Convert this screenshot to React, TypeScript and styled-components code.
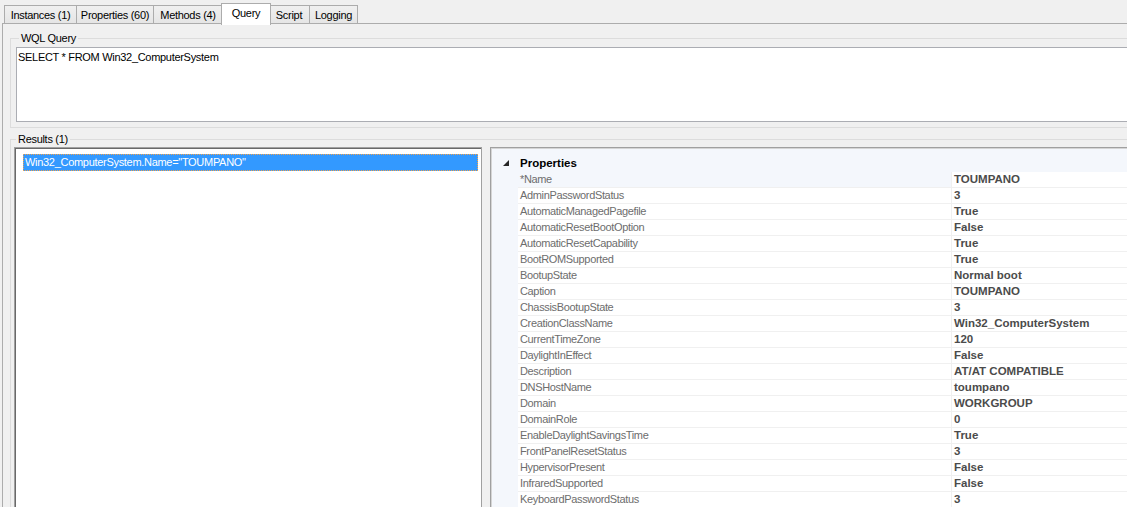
import React from 'react';
import styled, { createGlobalStyle } from 'styled-components';

const GlobalStyle = createGlobalStyle`
  html, body {
    margin: 0;
    padding: 0;
    background: #f0f0f0;
    overflow: hidden;
  }
  body {
    font-family: "Liberation Sans", Arial, sans-serif;
    font-size: 11px;
    letter-spacing: -0.3px;
    color: #000;
  }
`;

// tab captions with their widths in px
const tabs: [string, number][] = [
  ['Instances (1)', 73],
  ['Properties (60)', 78],
  ['Methods (4)', 70],
  ['Query', 50],
  ['Script', 42],
  ['Logging', 49],
];

const properties: [string, string][] = [
  ['*Name', 'TOUMPANO'],
  ['AdminPasswordStatus', '3'],
  ['AutomaticManagedPagefile', 'True'],
  ['AutomaticResetBootOption', 'False'],
  ['AutomaticResetCapability', 'True'],
  ['BootROMSupported', 'True'],
  ['BootupState', 'Normal boot'],
  ['Caption', 'TOUMPANO'],
  ['ChassisBootupState', '3'],
  ['CreationClassName', 'Win32_ComputerSystem'],
  ['CurrentTimeZone', '120'],
  ['DaylightInEffect', 'False'],
  ['Description', 'AT/AT COMPATIBLE'],
  ['DNSHostName', 'toumpano'],
  ['Domain', 'WORKGROUP'],
  ['DomainRole', '0'],
  ['EnableDaylightSavingsTime', 'True'],
  ['FrontPanelResetStatus', '3'],
  ['HypervisorPresent', 'False'],
  ['InfraredSupported', 'False'],
  ['KeyboardPasswordStatus', '3'],
];

const App = () => {
  return (
    <Window>
      <GlobalStyle />
      <TabStrip>
        {tabs.map(([t, w]) => (
          <Tab key={t} $active={t === 'Query'} $width={w}>
            {t}
          </Tab>
        ))}
      </TabStrip>
      <TabPage>
        <GroupBox>
          <Legend $indent={3}>WQL Query</Legend>
          <QueryBox>SELECT * FROM Win32_ComputerSystem</QueryBox>
        </GroupBox>
        <ResultsGroup>
          <Legend $indent={2}>Results (1)</Legend>
          <Split>
            <ListBox>
              <ListItem $selected>Win32_ComputerSystem.Name="TOUMPANO"</ListItem>
            </ListBox>
            <Splitter />
            <PropertyGrid>
              <CategoryRow>
                <Margin>
                  <svg width="6" height="6" viewBox="0 0 6 6">
                    <polygon points="6,0 6,6 0,6" fill="#262626" />
                  </svg>
                </Margin>
                <CategoryLabel>Properties</CategoryLabel>
              </CategoryRow>
              {properties.map(([name, value], i) => (
                <PropRow key={name}>
                  <Margin />
                  <NameCell $highlight={i === 0}>{name}</NameCell>
                  <ValueCell>{value}</ValueCell>
                </PropRow>
              ))}
            </PropertyGrid>
          </Split>
        </ResultsGroup>
      </TabPage>
    </Window>
  );
};

export default App;

const Window = styled.div`
  width: 1127px;
  height: 507px;
  overflow: hidden;
  background: #f0f0f0;
`;

const TabStrip = styled.div`
  display: flex;
  align-items: flex-end;
  height: 24px;
  padding-left: 4px;
  position: relative;
  z-index: 1;
`;

const Tab = styled.div<{ $active?: boolean; $width: number }>`
  box-sizing: border-box;
  width: ${(p) => p.$width}px;
  flex-shrink: 0;
  text-align: center;
  height: ${(p) => (p.$active ? '22px' : '19px')};
  line-height: ${(p) => (p.$active ? '19px' : '18px')};
  margin: 0 ${(p) => (p.$active ? '-2px' : '0')} ${(p) => (p.$active ? '-1px' : '0')}
    ${(p) => (p.$active ? '-2px' : '-1px')};
  border: 1px solid #acacac;
  border-bottom: ${(p) => (p.$active ? 'none' : '1px solid #acacac')};
  background: ${(p) =>
    p.$active ? '#ffffff' : 'linear-gradient(#f0f0f0, #e5e5e5)'};
  position: relative;
  z-index: ${(p) => (p.$active ? 2 : 0)};
  white-space: nowrap;
  &:first-child {
    margin-left: 0;
  }
`;

const TabPage = styled.div`
  box-sizing: border-box;
  width: 1160px;
  height: 500px;
  margin-left: 2px;
  margin-top: -1px;
  border: 1px solid #acacac;
  background: #f0f0f0;
  padding: 8px 0 0 7px;
  display: flex;
  flex-direction: column;
  gap: 5px;
`;

const GroupBox = styled.fieldset`
  margin: 0;
  padding: 2px 30px 5px 5px;
  border: 1px solid #dcdcdc;
  border-radius: 0;
  min-width: 0;
`;

const ResultsGroup = styled(GroupBox)`
  flex: 1;
  padding: 0 30px 0 3px;
  display: flex;
  flex-direction: column;
`;

const Legend = styled.legend<{ $indent: number }>`
  padding: 0 2px;
  margin-left: ${(p) => p.$indent}px;
  line-height: 13px;
  color: #000;
`;

const QueryBox = styled.div`
  box-sizing: border-box;
  height: 75px;
  border: 1px solid #abadb3;
  background: #fff;
  padding: 2px 1px;
  line-height: 14px;
`;

const Split = styled.div`
  display: flex;
  flex: 1;
  margin-top: 1px;
  min-height: 0;
`;

const ListBox = styled.div`
  box-sizing: border-box;
  width: 468px;
  flex-shrink: 0;
  background: #fff;
  border: 1px solid #a0a0a0;
  box-shadow: inset 1px 1px 0 #696969;
  padding: 6px 3px 0 8px;
`;

const ListItem = styled.div<{ $selected?: boolean }>`
  height: 17px;
  line-height: 15px;
  box-sizing: border-box;
  padding: 0 1px;
  background: ${(p) => (p.$selected ? '#3399ff' : 'transparent')};
  color: ${(p) => (p.$selected ? '#fff' : '#000')};
  border: 1px dotted ${(p) => (p.$selected ? '#f2a14a' : 'transparent')};
`;

const Splitter = styled.div`
  width: 8px;
  flex-shrink: 0;
`;

const PropertyGrid = styled.div`
  flex: 1;
  box-sizing: border-box;
  border: 1px solid #a0a0a0;
  box-shadow: inset 1px 1px 0 #d5d5d5;
  background: #f4f7fc;
  padding-top: 6px;
  overflow: hidden;
`;

const Row = styled.div`
  display: flex;
  height: 16px;
  align-items: stretch;
`;

const CategoryRow = styled(Row)`
  height: 18px;
  align-items: center;
`;

const PropRow = styled(Row)``;

const Margin = styled.div`
  width: 27px;
  height: 16px;
  flex-shrink: 0;
  display: flex;
  align-items: center;
  justify-content: flex-end;
  padding-right: 9px;
  box-sizing: border-box;
`;

const CategoryLabel = styled.div`
  font-weight: bold;
  font-size: 11.5px;
  letter-spacing: 0;
  line-height: 16px;
  padding-left: 2px;
  color: #000;
`;

const NameCell = styled.div<{ $highlight?: boolean }>`
  width: 434px;
  flex-shrink: 0;
  box-sizing: border-box;
  padding-left: 2px;
  line-height: 15px;
  color: #6d6d6d;
  letter-spacing: -0.35px;
  background: ${(p) => (p.$highlight ? '#f4f7fc' : '#fff')};
  border-bottom: 1px solid #f0f0f0;
  border-right: 1px solid #f0f0f0;
  white-space: nowrap;
  overflow: hidden;
`;

const ValueCell = styled.div`
  flex: 1;
  padding-left: 2px;
  line-height: 15px;
  font-weight: bold;
  font-size: 11.5px;
  letter-spacing: 0;
  color: #4b4b4b;
  background: #fff;
  border-bottom: 1px solid #f0f0f0;
  white-space: nowrap;
`;
